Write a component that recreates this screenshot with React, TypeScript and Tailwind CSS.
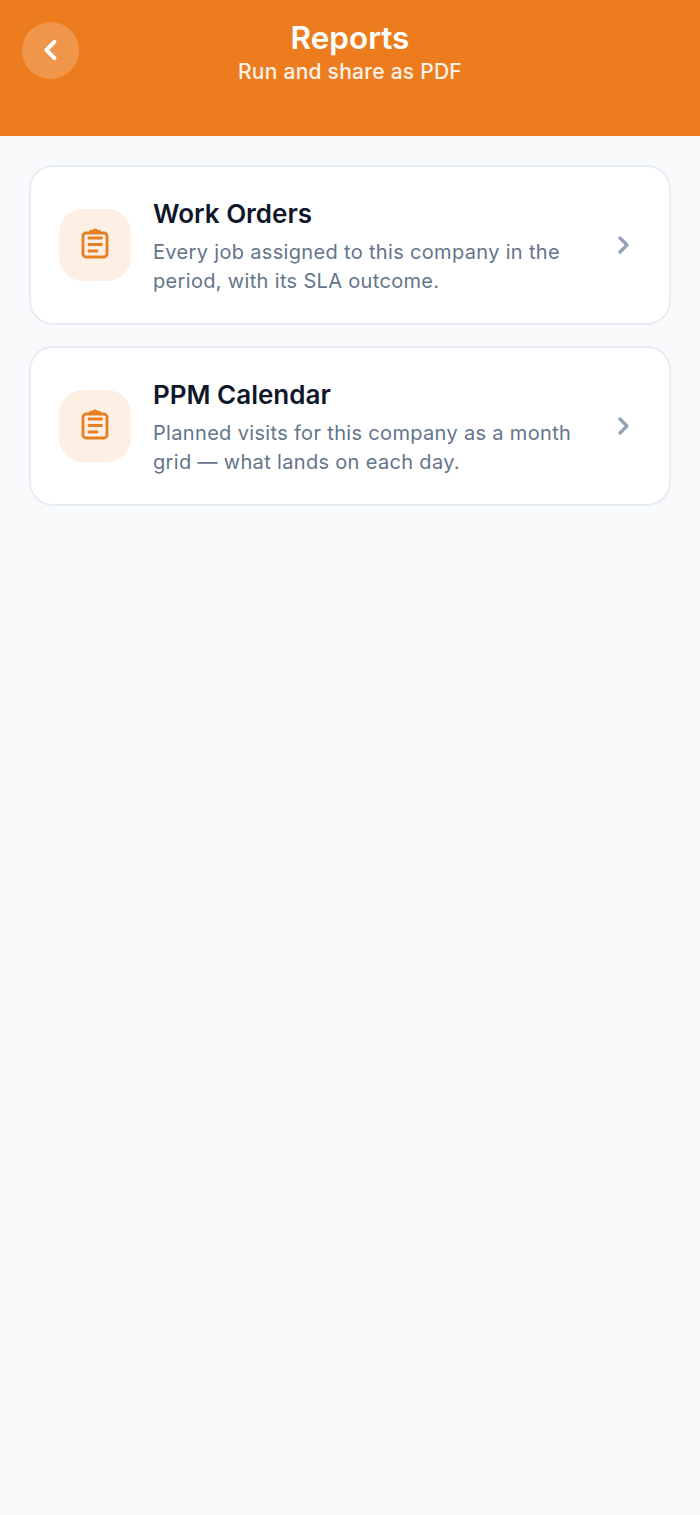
import { FC } from "react";

const ClipboardIcon = () => (
  <svg width="30" height="32" viewBox="0 0 30 32" fill="none" stroke="#e67e22" strokeWidth="2.8" strokeLinecap="round" strokeLinejoin="round" className="-mt-[5px]">
    <rect x="3" y="6" width="24" height="24" rx="3" />
    <path d="M10.5 5.5V4.5h2.2a2.4 2.4 0 0 1 4.6 0h2.2v1" />
    <path d="M9 11h12.5M9 17.5h12.5M9 24h8" />
  </svg>
);

const Chevron = ({ color, width }: { color: string; width: number }) => (
  <svg width={width} height={width} viewBox="0 0 24 24" fill="none" stroke={color} strokeWidth="3.4" strokeLinecap="round" strokeLinejoin="round">
    <path d="M9 5l7 7-7 7" />
  </svg>
);

interface ReportProps {
  title: string;
  description: string;
}

const ReportCard: FC<ReportProps> = ({ title, description }) => (
  <div className="flex h-[160px] items-center rounded-[24px] border-2 border-[#e8edf3] bg-white pl-[28px] pr-[34px]">
    <div className="flex h-[72px] w-[72px] shrink-0 items-center justify-center rounded-[24px] bg-[#fdefe3]">
      <ClipboardIcon />
    </div>
    <div className="ml-[22px] min-w-0 flex-1 pt-[2px]">
      <div className="text-[26px] leading-[34px] font-semibold text-[#0f172a]">{title}</div>
      <div className="mt-[7px] text-[20px] leading-[29px] tracking-[0.33px] text-[#64748b]">{description}</div>
    </div>
    <Chevron color="#94a3b8" width={24} />
  </div>
);

export default function App() {
  return (
    <div className="min-h-[1515px] bg-[#f8fafc] font-['Inter',sans-serif]">
      <div className="relative h-[136px] bg-[#ec7c1e] pt-[19px] text-center">
        <button className="absolute top-[22px] left-[22px] flex h-[57px] w-[57px] items-center justify-center rounded-full bg-white/20">
          <svg width="28" height="28" viewBox="0 0 24 24" fill="none" stroke="#fff" strokeWidth="3.4" strokeLinecap="round" strokeLinejoin="round" className="-mt-[2px]">
            <path d="M15 5l-7 7 7 7" />
          </svg>
        </button>
        <div className="text-[31.5px] leading-[38px] font-semibold text-white">Reports</div>
        <div className="text-[21px] leading-[30px] tracking-[0.25px] font-medium text-white/90">Run and share as PDF</div>
      </div>
      <div className="flex flex-col gap-[21px] px-[29px] pt-[29px]">
        <ReportCard title="Work Orders" description="Every job assigned to this company in the period, with its SLA outcome." />
        <ReportCard title="PPM Calendar" description="Planned visits for this company as a month grid — what lands on each day." />
      </div>
    </div>
  );
}
